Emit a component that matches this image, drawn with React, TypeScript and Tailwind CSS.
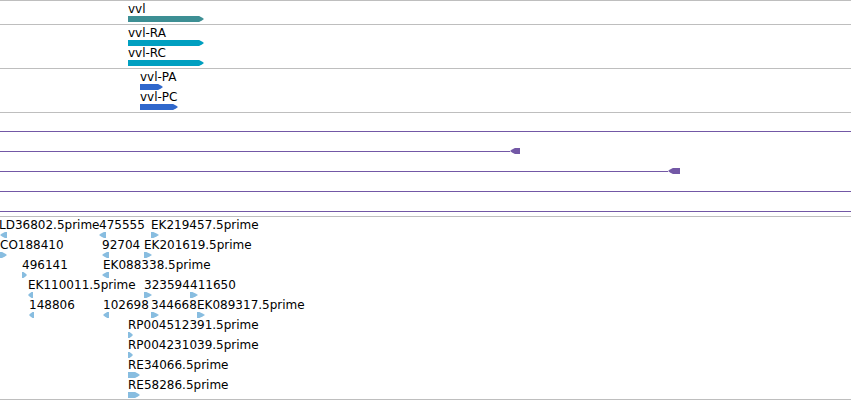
type Strand = '+' | '-';

interface Feature {
  name: string;
  start: number;
  end: number;
  strand: Strand;
  labelStart?: number;
}

interface TrackData {
  id: string;
  color: string;
  rows: Feature[][];
}

const HEIGHT = 6;

const tracks: TrackData[] = [
  { id: 'gene', color: 'text-[#3d8f94]', rows: [[{ name: 'vvl', start: 128, end: 204, strand: '+' }]] },
  {
    id: 'transcript',
    color: 'text-[#009fc0]',
    rows: [
      [{ name: 'vvl-RA', start: 128, end: 204, strand: '+' }],
      [{ name: 'vvl-RC', start: 128, end: 204, strand: '+' }],
    ],
  },
  {
    id: 'protein',
    color: 'text-[#3068cc]',
    rows: [
      [{ name: 'vvl-PA', start: 140, end: 163, strand: '+' }],
      [{ name: 'vvl-PC', start: 140, end: 178, strand: '+' }],
    ],
  },
];

// aligned spans that run in from outside of the region; no end = crosses the whole region
const spans: { id: number; start?: number; end?: number }[] = [
  { id: 1 },
  { id: 2, start: 510, end: 520 },
  { id: 3, start: 668, end: 680 },
  { id: 4 },
  { id: 5 },
];

const ests: Feature[][] = [
  [
    { name: 'LD36802.5prime', start: 0, end: 7, strand: '-', labelStart: -1 },
    { name: '475555', start: 99, end: 106, strand: '-' },
    { name: 'EK219457.5prime', start: 151, end: 159, strand: '+' },
  ],
  [
    { name: 'CO188410', start: 0, end: 7, strand: '+' },
    { name: '92704', start: 102, end: 109, strand: '-' },
    { name: 'EK201619.5prime', start: 144, end: 152, strand: '+' },
  ],
  [
    { name: '496141', start: 22, end: 27, strand: '+' },
    { name: 'EK088338.5prime', start: 102, end: 109, strand: '-', labelStart: 103 },
  ],
  [
    { name: 'EK110011.5prime', start: 28, end: 33, strand: '-' },
    { name: '323594', start: 144, end: 152, strand: '+' },
    { name: '411650', start: 190, end: 198, strand: '+' },
  ],
  [
    { name: '148806', start: 29, end: 34, strand: '-' },
    { name: '102698', start: 103, end: 109, strand: '-' },
    { name: '344668', start: 151, end: 159, strand: '+' },
    { name: 'EK089317.5prime', start: 197, end: 205, strand: '+' },
  ],
  [{ name: 'RP004512391.5prime', start: 128, end: 133, strand: '+' }],
  [{ name: 'RP004231039.5prime', start: 128, end: 133, strand: '+' }],
  [{ name: 'RE34066.5prime', start: 128, end: 140, strand: '+' }],
  [{ name: 'RE58286.5prime', start: 128, end: 140, strand: '+' }],
];

function Glyph({ width, strand }: { width: number; strand: Strand }) {
  // short features are all arrow head
  const head = width < 10 ? width : 7;
  const x = (share: number) => {
    const pos = width - head * (1 - share);
    return strand === '+' ? pos : width - pos;
  };
  const tail = strand === '+' ? 0 : width;
  const points = [
    [tail, 0],
    [x(0.3), 0],
    [x(0.7), 1.4],
    [x(1), HEIGHT / 2],
    [x(0.7), 4.4],
    [x(0.3), HEIGHT],
    [tail, HEIGHT],
  ];
  return (
    <svg width={width} height={HEIGHT} className="block shrink-0 fill-current" aria-hidden="true">
      <polygon points={points.join(' ')} />
    </svg>
  );
}

function FeatureItem({ feature }: { feature: Feature }) {
  const { name, start, end, strand, labelStart = start } = feature;
  return (
    <div className="col-start-1 row-start-1">
      <div className="h-[15px] leading-4 whitespace-nowrap text-black" style={{ marginLeft: labelStart }}>{name}</div>
      <div style={{ marginLeft: start }}>
        <Glyph width={end - start} strand={strand} />
      </div>
    </div>
  );
}

function Row({ features }: { features: Feature[] }) {
  return (
    <div className="grid h-5 grid-cols-1">
      {features.map((f) => <FeatureItem key={f.name} feature={f} />)}
    </div>
  );
}

export default function App() {
  return (
    <main className="overflow-hidden bg-white font-['DejaVu_Sans',sans-serif] text-xs">
      {tracks.map((t) => (
        <section key={t.id} className={`border-t border-[#bebebe] pb-[3px] ${t.color}`}>
          {t.rows.map((row, i) => <Row key={i} features={row} />)}
        </section>
      ))}
      <section className="border-t border-[#bebebe] pb-[3px] text-[#7358a6]">
        {spans.map((s) => (
          <div key={s.id} className="h-5 pt-[15px]">
            <div className="flex h-[6px] items-center">
              {s.start !== undefined && s.end !== undefined ? (
                <>
                  <div className="h-px bg-current" style={{ width: s.start }} />
                  <Glyph width={s.end - s.start} strand="-" />
                </>
              ) : (
                <div className="h-px w-full bg-current" />
              )}
            </div>
          </div>
        ))}
      </section>
      <section className="border-y border-[#bebebe] pb-[2px] text-[#88bde0]">
        {ests.map((row, i) => <Row key={i} features={row} />)}
      </section>
    </main>
  );
}
